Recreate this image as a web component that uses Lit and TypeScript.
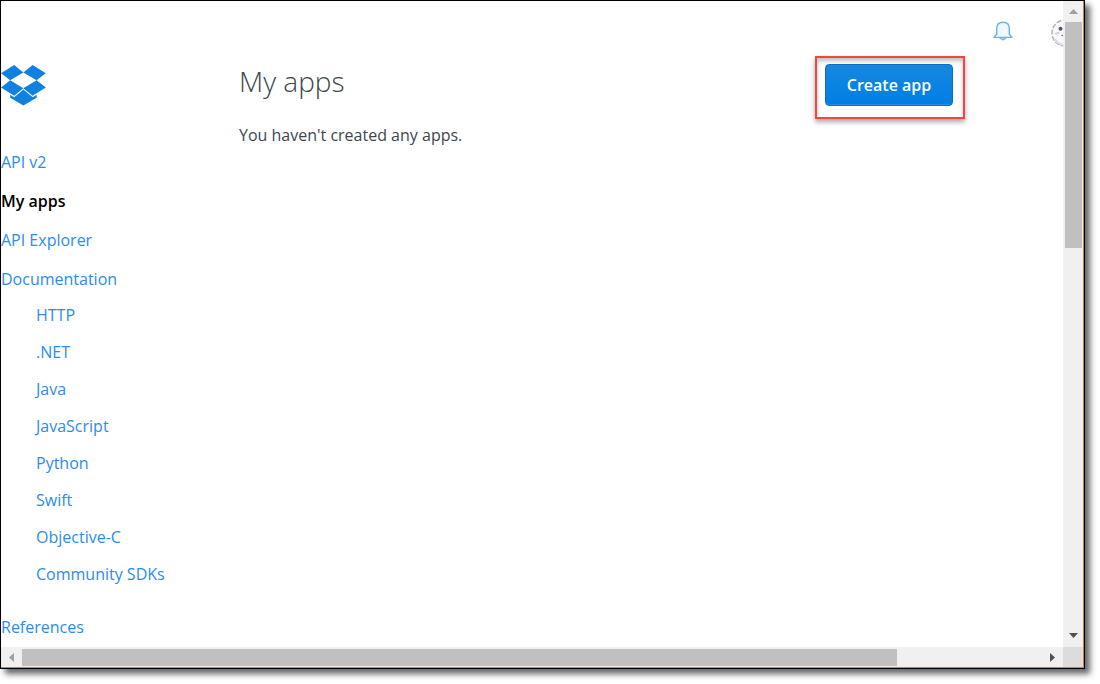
import { LitElement, html, css } from "lit";
import { customElement } from "lit/decorators.js";

const SDKS = ["HTTP", ".NET", "Java", "JavaScript", "Python", "Swift", "Objective-C", "Community SDKs"];

@customElement("side-nav")
class SideNav extends LitElement {
  static styles = css`
    :host { display: block; }
    .logo { display: block; width: 45px; height: 41px; fill: #1081de; }
    ul { list-style: none; margin: 0; padding: 0; display: flex; flex-direction: column; }
    .top { gap: 17px; margin-top: 45px; }
    .sub { gap: 15px; margin: 14px 0; padding-left: 35px; }
    a { display: block; line-height: 22px; color: #2b8cee; text-decoration: none; white-space: nowrap; }
    .current { color: #000; font-weight: 600; }
  `;
  render() {
    return html`
      <a href="#home" aria-label="Dropbox">
        <svg class="logo" viewBox="0 0 45 41">
          <path d="M13.2 0 22.3 7.5 9.2 15.2 0 8.3Z M31.6 0 22.3 7.5 35.6 15.2 44.8 8.3Z M0 22.6 9.2 15.2 22.3 23.2 13.2 30.8Z M44.8 22.6 35.6 15.2 22.3 23.2 31.6 30.8Z"></path>
          <path d="M22.4 24.6 13.2 32.2 9.2 29.7V32.8L22.4 40.6 35.7 32.8V29.7L31.7 32.2Z"></path>
        </svg>
      </a>
      <nav>
        <ul class="top">
          <li><a href="#v2">API v2</a></li>
          <li><a class="current" href="#apps" aria-current="page">My apps</a></li>
          <li><a href="#explorer">API Explorer</a></li>
          <li>
            <a href="#docs">Documentation</a>
            <ul class="sub">${SDKS.map((name) => html`<li><a href="#docs">${name}</a></li>`)}</ul>
          </li>
          <li><a href="#references">References</a></li>
        </ul>
      </nav>
    `;
  }
}

@customElement("scroll-track")
class ScrollTrack extends LitElement {
  static properties = { orientation: { type: String, reflect: true } };
  static styles = css`
    :host { display: flex; background: #f0f0f0; }
    :host([orientation="vertical"]) { flex-direction: column; padding: 0 1px 1px 2px; }
    :host([orientation="horizontal"]) { padding: 2px 0 1px; }
    button { flex: none; border: 0; padding: 0; background: none; display: flex; align-items: center; justify-content: center; width: 17px; height: 17px; color: #505050; }
    :host([orientation="vertical"]) button { height: 21px; }
    :host([orientation="horizontal"]) button { width: 21px; }
    .start { color: #a0a0a0; }
    svg { display: block; fill: currentColor; }
    .rail { flex: 1; display: flex; flex-direction: inherit; }
    .thumb { background: #c0c0c0; }
    :host([orientation="vertical"]) .thumb { height: 37.4%; }
    :host([orientation="horizontal"]) .thumb { width: 85.8%; }
  `;
  declare orientation: string;
  render() {
    const v = this.orientation === "vertical";
    return html`
      <button class="start" aria-label=${v ? "Scroll up" : "Scroll left"}>
        ${v
          ? html`<svg width="9" height="5"><path d="M0 5 4.5 0 9 5Z"></path></svg>`
          : html`<svg width="5" height="9"><path d="M5 0 0 4.5 5 9Z"></path></svg>`}
      </button>
      <div class="rail"><div class="thumb"></div></div>
      <button aria-label=${v ? "Scroll down" : "Scroll right"}>
        ${v
          ? html`<svg width="9" height="5"><path d="M0 0H9L4.5 5Z"></path></svg>`
          : html`<svg width="5" height="9"><path d="M0 0 5 4.5 0 9Z"></path></svg>`}
      </button>
    `;
  }
}

@customElement("app-root")
class AppRoot extends LitElement {
  static styles = css`
    :host { display: block; box-sizing: border-box; height: 100vh; padding: 0 15px 15px 0; background: #fff; overflow: hidden; font: 16px/22px "Open Sans", sans-serif; color: #3d464d; }
    .frame { box-sizing: border-box; height: 100%; border: 1px solid #000; background: #fff; box-shadow: 5px 5px 6px rgba(0, 0, 0, 0.6); }
    .window { box-sizing: border-box; height: 100%; border: solid #c8834f; border-width: 0 1px 1px 0; display: grid; grid-template-columns: minmax(0, 1fr) 20px; grid-template-rows: minmax(0, 1fr) 20px; }
    .corner { background: #dcdcdc; }
    .page { overflow: hidden; }
    header { display: flex; justify-content: flex-end; align-items: center; gap: 38px; height: 64px; }
    header button { border: 0; padding: 0; background: none; display: block; }
    header svg { display: block; }
    .bell { padding-bottom: 4px; }
    .avatar { margin-right: -16px; }
    .columns { display: grid; grid-template-columns: 238px minmax(0, 1fr); padding-right: 98px; }
    main { margin-top: -9px; }
    .title { display: flex; justify-content: space-between; align-items: flex-start; }
    h1 { margin: 6px 0 0; font-size: 28px; line-height: 38px; font-weight: 300; }
    .highlight { border: 2px solid #f44444; padding: 6px 10px 11px 8px; box-shadow: 0 3px 5px rgba(0, 0, 0, 0.35), inset 0 3px 4px rgba(0, 0, 0, 0.25); }
    .create { display: block; box-sizing: border-box; width: 128px; height: 42px; padding: 0; border: 1px solid #0c6ebe; border-radius: 4px; background: linear-gradient(#1588e0, #007ee5); box-shadow: inset 0 -1px #2a8ce0; color: #fff; font: 600 16px/22px "Open Sans", sans-serif; }
    p { margin: 5px 0 0; }
  `;
  render() {
    return html`
      <div class="frame">
        <div class="window">
          <div class="page">
            <header>
              <button class="bell" aria-label="Notifications">
                <svg width="20" height="20" viewBox="0 0 20 20">
                  <path d="M6.5 16.8Q10 21 13.5 16.8Z" fill="#a9d5f9" stroke="#66b2f2" stroke-width="1"></path>
                  <path d="M3.7 13V7.5C3.7 3.5 5.8 1.2 10 1.2S16.3 3.5 16.3 7.5V13L19 16.4H1Z" fill="#f0f7ff" stroke="#66b2f2" stroke-width="1.4" stroke-linejoin="round"></path>
                </svg>
              </button>
              <button class="avatar" aria-label="Account">
                <svg width="28" height="28" viewBox="0 0 28 28">
                  <circle cx="14" cy="14" r="13" fill="#fafafc" stroke="#b4b4bd" stroke-width="1.6" stroke-dasharray="5 1.5"></circle>
                  <path d="M3.5 20Q6 24 11 25.5" fill="none" stroke="#dcdce3" stroke-width="2"></path>
                  <circle cx="9.5" cy="9.8" r="2" fill="#55566e"></circle>
                  <circle cx="18.5" cy="9.8" r="2" fill="#55566e"></circle>
                  <path d="M4 15 8.5 13.5" stroke="#d2d3dd" stroke-width="2"></path>
                  <path d="M10.5 16Q12 17 14 16" fill="none" stroke="#777889" stroke-width="1.4"></path>
                </svg>
              </button>
            </header>
            <div class="columns">
              <side-nav></side-nav>
              <main>
                <div class="title">
                  <h1>My apps</h1>
                  <div class="highlight"><button class="create">Create app</button></div>
                </div>
                <p>You haven't created any apps.</p>
              </main>
            </div>
          </div>
          <scroll-track orientation="vertical"></scroll-track>
          <scroll-track orientation="horizontal"></scroll-track>
          <div class="corner"></div>
        </div>
      </div>
    `;
  }
}
